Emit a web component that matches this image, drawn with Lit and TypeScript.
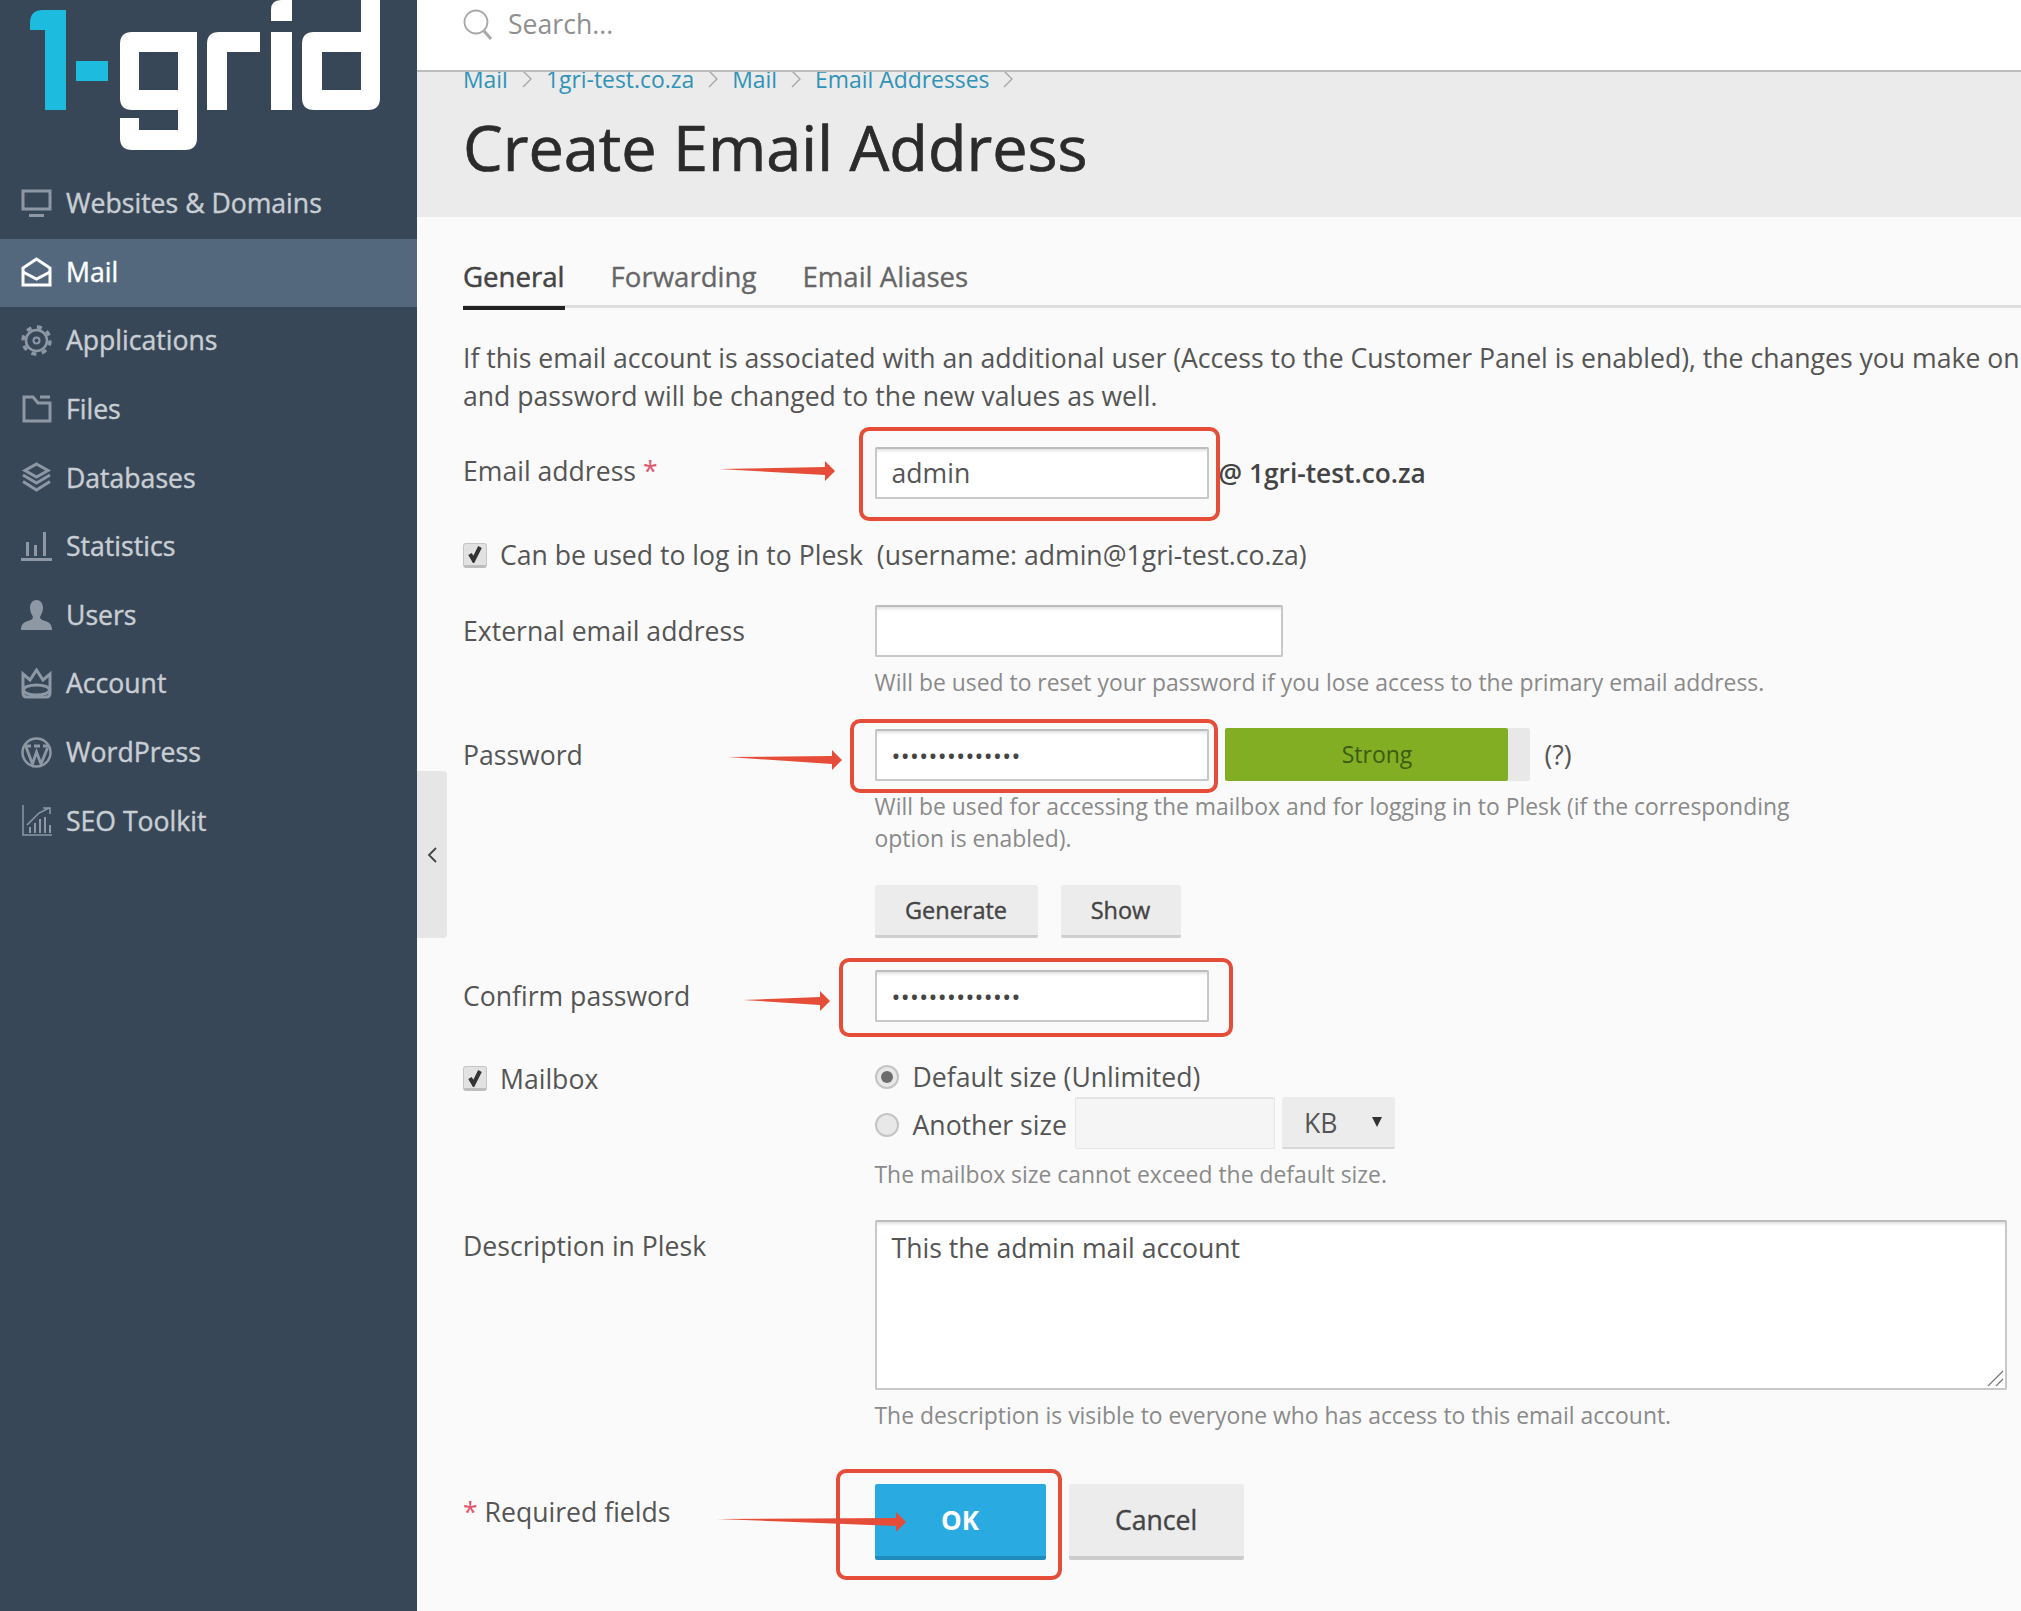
import { LitElement, html, css, svg } from 'lit';
import { customElement } from 'lit/decorators.js';

const NAV_ICONS: Record<string, unknown> = {
  monitor: svg`<rect x="2" y="3" width="27" height="18" fill="none" stroke="currentColor" stroke-width="3"/><rect x="8" y="26" width="15" height="3" fill="currentColor"/>`,
  mail: svg`<path d="M2 12 15.500 3 29 12V29H2Z" fill="none" stroke="currentColor" stroke-width="3"/><path d="M2 16 15.500 23 29 16" fill="none" stroke="currentColor" stroke-width="3"/>`,
  gear: svg`<circle cx="15.500" cy="15.500" r="13.500" fill="none" stroke="currentColor" stroke-width="3.500" stroke-dasharray="5 5.600"/><circle cx="15.500" cy="15.500" r="10.500" fill="none" stroke="currentColor" stroke-width="2.500"/><circle cx="15.500" cy="15.500" r="3" fill="none" stroke="currentColor" stroke-width="2"/>`,
  folder: svg`<path d="M3 3H12L17 9H29V27H3Z" fill="none" stroke="currentColor" stroke-width="3"/><path d="M19 3H29" stroke="currentColor" stroke-width="3"/>`,
  layers: svg`<path d="M15.500 2 27 8.500 15.500 15 4 8.500Z" fill="none" stroke="currentColor" stroke-width="3"/><path d="M2 13 15.500 21 29 13M2 19.500 15.500 28 29 19.500" fill="none" stroke="currentColor" stroke-width="3"/>`,
  bars: svg`<rect x="0" y="27" width="31" height="3" fill="currentColor"/><rect x="5" y="11" width="3" height="14" fill="currentColor"/><rect x="13" y="14" width="3" height="11" fill="currentColor"/><rect x="22" y="1" width="3" height="24" fill="currentColor"/>`,
  user: svg`<path d="M15.500 1C20 1 22 5 22 9 22 13 20 16 19 18 19 20 21 21 24 22 28 23 31 25 31 31H0C0 25 3 23 7 22 10 21 12 20 12 18 11 16 9 13 9 9 9 5 11 1 15.500 1Z" fill="currentColor"/>`,
  crown: svg`<path d="M2 6 9 12 15.500 2 22 12 29 6V25Q29 29 25 29H6Q2 29 2 25Z" fill="none" stroke="currentColor" stroke-width="3"/><ellipse cx="15.500" cy="22" rx="13" ry="5" fill="none" stroke="currentColor" stroke-width="3"/>`,
  wp: svg`<circle cx="15.500" cy="15.500" r="14" fill="none" stroke="currentColor" stroke-width="2.500"/><path d="M5 10 11.500 27 15.500 15 20 27 26.500 11M4 9H10M13 9H19M22 9H27" fill="none" stroke="currentColor" stroke-width="2.800"/>`,
  seo: svg`<path d="M2 0V30H31" fill="none" stroke="currentColor" stroke-width="1.500"/><path d="M6 20 18 8 28 3M22 3H29V9" fill="none" stroke="currentColor" stroke-width="1.500"/><path d="M9 28V22M14 28V18M19 28V14M24 28V12M29 28V20" stroke="currentColor" stroke-width="2"/>`,
};

const NAV = [
  { label: 'Websites & Domains', icon: 'monitor' },
  { label: 'Mail', icon: 'mail', active: true },
  { label: 'Applications', icon: 'gear' },
  { label: 'Files', icon: 'folder' },
  { label: 'Databases', icon: 'layers' },
  { label: 'Statistics', icon: 'bars' },
  { label: 'Users', icon: 'user' },
  { label: 'Account', icon: 'crown' },
  { label: 'WordPress', icon: 'wp' },
  { label: 'SEO Toolkit', icon: 'seo' },
];

const CRUMBS = ['Mail', '1gri-test.co.za', 'Mail', 'Email Addresses'];

// red marks drawn on top of the screenshot
const BOXES = [
  { x: 859, y: 427, w: 361, h: 94 },
  { x: 850, y: 719, w: 368, h: 74 },
  { x: 839, y: 958, w: 394, h: 79 },
  { x: 836, y: 1469, w: 226, h: 111 },
];
const ARROWS = [
  { x1: 719, y1: 469, x2: 835, y2: 471 },
  { x1: 728, y1: 757, x2: 842, y2: 760 },
  { x1: 743, y1: 1000, x2: 830, y2: 1001 },
  { x1: 717, y1: 1519, x2: 906, y2: 1522 },
];

@customElement('app-root')
export class AppRoot extends LitElement {
  static styles = css`
    :host {
      display: block;
      width: 2021px;
      height: 1611px;
      position: relative;
      overflow: hidden;
      font-family: 'Open Sans', sans-serif;
      font-size: 26.600px;
      color: #555;
      background: #fafafa;
    }
    .shell {
      display: flex;
      height: 1611px;
    }
    .side {
      width: 417px;
      flex: none;
      background: #384757;
      color: #c9ced4;
    }
    .logo {
      height: 170px;
    }
    .logo svg {
      display: block;
    }
    .nav-item {
      height: 68.600px;
      box-sizing: border-box;
      padding-bottom: 2px;
      display: flex;
      align-items: center;
      gap: 14px;
      padding-left: 21px;
      font-size: 26.600px;
      -webkit-text-stroke: 0.400px;
    }
    .nav-item svg {
      width: 31px;
      height: 31px;
      flex: none;
      color: #8d98a4;
    }
    .nav-item.active {
      background: #53687d;
      color: #fff;
    }
    .nav-item.active svg {
      color: #fff;
    }
    .main {
      flex: 1;
      min-width: 0;
      overflow: hidden;
    }
    .top {
      position: relative;
      z-index: 1;
      height: 72px;
      background: #fff;
      border-bottom: 2px solid #bdbdbd;
      display: flex;
      align-items: flex-start;
      padding: 9px 0 0 46px;
      gap: 13px;
      color: #8f8f8f;
      box-sizing: border-box;
    }
    .top svg {
      width: 32px;
      height: 32px;
      flex: none;
    }
    .top span {
      line-height: 30px;
    }
    .head {
      display: flow-root;
      height: 145px;
      box-sizing: border-box;
      background: #ebebeb;
      padding-left: 46px;
    }
    .crumbs {
      display: flex;
      align-items: center;
      gap: 14px;
      height: 32px;
      margin-top: -9px;
      font-size: 22.900px;
      color: #2f93b8;
    }
    .crumbs svg {
      width: 10px;
      height: 18px;
      flex: none;
    }
    h1 {
      margin: 12px 0 0;
      font-size: 63px;
      font-weight: 400;
      -webkit-text-stroke: 0.700px;
      line-height: 80px;
      color: #2b2b2b;
    }
    .body {
      padding-left: 46px;
    }
    .tabs {
      display: flex;
      gap: 46px;
      padding-top: 39px;
      border-bottom: 3px solid #dedede;
      height: 49px;
      box-sizing: content-box;
      font-size: 27.600px;
    }
    .tab {
      height: 49px;
      line-height: 40px;
      font-weight: 400;
      color: #666;
      -webkit-text-stroke: 0.300px;
    }
    .tab.on {
      height: 50px;
      box-sizing: content-box;
      color: #444;
      -webkit-text-stroke: 0.500px;
      border-bottom: 4px solid #222;
    }
    .intro {
      margin: 32px 0 0;
      line-height: 37.500px;
      white-space: nowrap;
    }
    .row {
      display: flex;
      align-items: flex-start;
    }
    .label {
      width: 411.500px;
      flex: none;
      line-height: 52px;
      white-space: nowrap;
    }
    .star {
      color: #e2566e;
    }
    .m-email {
      margin-top: 30px;
    }
    .m-email .inline {
      margin-top: 2px;
    }
    .m-check {
      margin-top: 36px;
      height: 40px;
      align-items: center;
      gap: 13px;
    }
    .m-ext {
      margin-top: 30px;
    }
    .m-pass {
      margin-top: 29.500px;
    }
    .m-confirm {
      margin-top: 32px;
    }
    .m-mailbox {
      margin-top: 37px;
    }
    .m-desc {
      margin-top: 28.500px;
    }
    .m-submit {
      margin-top: 52.500px;
    }
    .field {
      display: flex;
      flex-direction: column;
      align-items: flex-start;
      min-width: 0;
    }
    .inline {
      display: flex;
      align-items: center;
      height: 52px;
    }
    input,
    textarea {
      display: block;
      box-sizing: border-box;
      font: inherit;
      color: #555;
      background: #fff;
      border: 2px solid #c8c8c8;
      border-top-color: #bcbcbc;
      border-radius: 2px;
      box-shadow: inset 0 4px 3px -2px #e2e2e2;
      padding: 0 15px;
      outline: none;
    }
    .w-sm {
      width: 334px;
      height: 52px;
    }
    .w-md {
      width: 408px;
      height: 52px;
    }
    .secret {
      font-size: 23.500px;
      letter-spacing: 0.400px;
      color: #444;
      padding-top: 2px;
    }
    .domain {
      margin-left: 10px;
      font-size: 26.300px;
      font-weight: 600;
      color: #444;
    }
    .hint {
      font-size: 22.900px;
      line-height: 32px;
      color: #8a8a8a;
      margin-top: 10px;
      width: 925px;
    }
    .meter {
      margin-left: 16px;
      width: 305px;
      height: 53px;
      background: #e8e8e8;
      border-radius: 2px;
    }
    .meter-fill {
      width: 283px;
      height: 53px;
      box-sizing: border-box;
      padding-left: 22px;
      background: #82ae24;
      border-radius: 2px;
      font-size: 23px;
      line-height: 53px;
      text-align: center;
      color: #3f5a12;
    }
    .qm {
      margin-left: 15px;
    }
    .btns {
      display: flex;
      gap: 23px;
      margin-top: 30.500px;
    }
    .btn {
      box-sizing: border-box;
      height: 53px;
      background: #ececec;
      border-bottom: 3px solid #cfcfcf;
      border-radius: 2px;
      font-size: 23.500px;
      -webkit-text-stroke: 0.400px;
      line-height: 50px;
      text-align: center;
      color: #444;
    }
    .b-gen {
      width: 163px;
    }
    .b-show {
      width: 120px;
    }
    .box {
      width: 24px;
      height: 25px;
      box-sizing: border-box;
      background: #e2e2e2;
      border: 1px solid #c6c6c6;
      border-bottom: 3px solid #bdbdbd;
      border-radius: 3px;
      flex: none;
      display: flex;
      align-items: center;
      justify-content: center;
    }
    .box svg {
      width: 16px;
      height: 18px;
    }
    .mailbox-label {
      display: flex;
      gap: 13px;
      align-items: center;
      width: 411.500px;
      height: 36px;
      flex: none;
      padding-top: 3px;
      box-sizing: border-box;
    }
    .opt {
      display: flex;
      align-items: center;
      gap: 14px;
      height: 36px;
    }
    .radio {
      width: 24px;
      height: 24px;
      box-sizing: border-box;
      border-radius: 50%;
      background: #e8e8e8;
      border: 2px solid #c4c4c4;
      display: flex;
      align-items: center;
      justify-content: center;
      flex: none;
    }
    .radio.on::after {
      content: '';
      width: 12px;
      height: 12px;
      border-radius: 50%;
      background: #6d6d6d;
    }
    .size-row {
      display: flex;
      align-items: center;
      height: 52px;
      margin-top: 2px;
    }
    .size-row .opt {
      padding-top: 3px;
      box-sizing: border-box;
    }
    .size-input {
      width: 200px;
      height: 52px;
      margin-left: 8px;
      background: #f5f5f5;
      border: 1px solid #e6e6e6;
      border-top: 2px solid #e4e4e4;
      box-shadow: none;
    }
    .select {
      position: relative;
      width: 113px;
      height: 52px;
      margin-left: 7px;
      box-sizing: border-box;
      background: #ececec;
      border-bottom: 2px solid #d8d8d8;
      border-radius: 2px;
      padding-left: 22px;
      line-height: 52px;
    }
    .select i {
      position: absolute;
      left: 90px;
      top: 20px;
      width: 0;
      height: 0;
      border-left: 5px solid transparent;
      border-right: 5px solid transparent;
      border-top: 10px solid #333;
    }
    .area {
      position: relative;
    }
    textarea {
      width: 1132px;
      height: 170px;
      padding: 6px 15px;
      line-height: 40px;
      resize: none;
    }
    .grip {
      position: absolute;
      right: 3px;
      bottom: 3px;
      width: 18px;
      height: 18px;
    }
    .desc-label {
      line-height: 40px;
      padding-top: 6px;
    }
    .req-label {
      line-height: 40px;
      padding-top: 8px;
    }
    .submit {
      display: flex;
      gap: 23px;
    }
    .s-btn {
      box-sizing: border-box;
      height: 76px;
      line-height: 72px;
      text-align: center;
      border-radius: 2px;
    }
    .ok {
      width: 171px;
      background: #29aae1;
      border-bottom: 4px solid #1f8cbc;
      color: #fff;
      font-size: 26px;
      font-weight: 700;
    }
    .cancel {
      width: 175px;
      background: #ececec;
      border-bottom: 4px solid #cccccc;
      color: #444;
      -webkit-text-stroke: 0.400px;
    }
    .handle {
      position: absolute;
      left: 417px;
      top: 771px;
      width: 30px;
      height: 167px;
      background: #e6e6e6;
      border-radius: 0 4px 4px 0;
      display: flex;
      align-items: center;
      justify-content: center;
    }
    .handle svg {
      width: 12px;
      height: 18px;
    }
    .red-box {
      position: absolute;
      box-sizing: border-box;
      border: 4px solid #e64d38;
      border-radius: 10px;
    }
    .arrows {
      position: absolute;
      left: 0;
      top: 0;
    }
  `;

  renderLogo() {
    return html`<svg width="417" height="170" viewBox="0 0 417 170" aria-label="1-grid logo">
      <g fill="#1dbcdf">
        <path d="M30 30V23Q30 10 43 10H66V110H45V30Z" />
        <rect x="76" y="61" width="32" height="20" />
      </g>
      <g fill="#fff" fill-rule="evenodd">
        <path d="M132 32H197V138Q197 150 185 150H132Q120 150 120 138V118H139V130H178V110H132Q120 110 120 98V44Q120 32 132 32ZM139 52V90H178V52Z" />
        <path d="M219 32H260V52H227V110H207V44Q207 32 219 32Z" />
        <rect x="271" y="32" width="21" height="78" />
        <path d="M271 21V10Q271 0 281 0H292V21Z" />
        <path d="M361 0H380V98Q380 110 368 110H314Q302 110 302 98V44Q302 32 314 32H361ZM322 52V90H361V52Z" />
      </g>
    </svg>`;
  }

  renderCheck() {
    return html`<span class="box"
      ><svg viewBox="0 0 16 18">
        <path d="M3 9 6.500 15 13 2" fill="none" stroke="#333" stroke-width="4" /></svg
    ></span>`;
  }

  renderMarks() {
    return html`${BOXES.map(
        (b) => html`<div
          class="red-box"
          style="left:${b.x}px;top:${b.y}px;width:${b.w}px;height:${b.h}px"
        ></div>`,
      )}
      <svg class="arrows" width="2021" height="1611">
        ${ARROWS.map((a) => {
          const hx = a.x2 - 10;
          return svg`<polygon fill="#e64d38" points="${a.x1},${a.y1} ${hx},${a.y2 - 4} ${hx},${a.y2 - 10} ${a.x2},${a.y2} ${hx},${a.y2 + 10} ${hx},${a.y2 + 4}"/>`;
        })}
      </svg>`;
  }

  render() {
    return html`
      <div class="shell">
        <aside class="side">
          <div class="logo">${this.renderLogo()}</div>
          ${NAV.map(
            (n) => html`<div class="nav-item ${n.active ? 'active' : ''}">
              <svg viewBox="0 0 31 31">${NAV_ICONS[n.icon]}</svg>
              <span>${n.label}</span>
            </div>`,
          )}
        </aside>
        <div class="main">
          <div class="top">
            <svg viewBox="0 0 32 32">
              <circle cx="13" cy="13" r="11.500" fill="none" stroke="#a8a8a8" stroke-width="1.800" />
              <path d="M21 22 28 30" stroke="#a8a8a8" stroke-width="3" />
            </svg>
            <span>Search...</span>
          </div>
          <div class="head">
            <div class="crumbs">
              ${CRUMBS.map(
                (c) => html`<span>${c}</span
                  ><svg viewBox="0 0 10 18">
                    <path d="M1 1 9 9 1 17" fill="none" stroke="#a5a5a5" stroke-width="1.300" />
                  </svg>`,
              )}
            </div>
            <h1>Create Email Address</h1>
          </div>
          <div class="body">
            <div class="tabs">
              <div class="tab on">General</div>
              <div class="tab">Forwarding</div>
              <div class="tab">Email Aliases</div>
            </div>
            <p class="intro">
              If this email account is associated with an additional user (Access to the Customer
              Panel is enabled), the changes you make on<br />
              and password will be changed to the new values as well.
            </p>

            <div class="row m-email">
              <div class="label">Email address <span class="star">*</span></div>
              <div class="inline">
                <input class="w-sm" value="admin" readonly />
                <span class="domain">@ 1gri-test.co.za</span>
              </div>
            </div>

            <div class="row m-check">
              ${this.renderCheck()}
              <span>Can be used to log in to Plesk&nbsp; (username: admin@1gri-test.co.za)</span>
            </div>

            <div class="row m-ext">
              <div class="label">External email address</div>
              <div class="field">
                <input class="w-md" readonly />
                <div class="hint">
                  Will be used to reset your password if you lose access to the primary email
                  address.
                </div>
              </div>
            </div>

            <div class="row m-pass">
              <div class="label">Password</div>
              <div class="field">
                <div class="inline">
                  <input class="w-sm secret" type="password" value="12345678901234" readonly />
                  <div class="meter"><div class="meter-fill">Strong</div></div>
                  <span class="qm">(?)</span>
                </div>
                <div class="hint">
                  Will be used for accessing the mailbox and for logging in to Plesk (if the
                  corresponding option is enabled).
                </div>
                <div class="btns">
                  <div class="btn b-gen">Generate</div>
                  <div class="btn b-show">Show</div>
                </div>
              </div>
            </div>

            <div class="row m-confirm">
              <div class="label">Confirm password</div>
              <input class="w-sm secret" type="password" value="12345678901234" readonly />
            </div>

            <div class="row m-mailbox">
              <div class="mailbox-label">${this.renderCheck()}<span>Mailbox</span></div>
              <div class="field">
                <div class="opt"><span class="radio on"></span>Default size (Unlimited)</div>
                <div class="size-row">
                  <div class="opt"><span class="radio"></span>Another size</div>
                  <input class="size-input" readonly />
                  <div class="select">KB<i></i></div>
                </div>
                <div class="hint">The mailbox size cannot exceed the default size.</div>
              </div>
            </div>

            <div class="row m-desc">
              <div class="label desc-label">Description in Plesk</div>
              <div class="field">
                <div class="area">
                  <textarea readonly>This the admin mail account</textarea>
                  <svg class="grip" viewBox="0 0 18 18">
                    <path d="M2 17 17 2M10 17 17 10" stroke="#777" stroke-width="1.200" />
                  </svg>
                </div>
                <div class="hint">
                  The description is visible to everyone who has access to this email account.
                </div>
              </div>
            </div>

            <div class="row m-submit">
              <div class="label req-label"><span class="star">*</span> Required fields</div>
              <div class="submit">
                <div class="s-btn ok">OK</div>
                <div class="s-btn cancel">Cancel</div>
              </div>
            </div>
          </div>
        </div>
      </div>
      <div class="handle">
        <svg viewBox="0 0 12 18">
          <path d="M10 2 3 9 10 16" fill="none" stroke="#444" stroke-width="1.800" />
        </svg>
      </div>
      ${this.renderMarks()}
    `;
  }
}
